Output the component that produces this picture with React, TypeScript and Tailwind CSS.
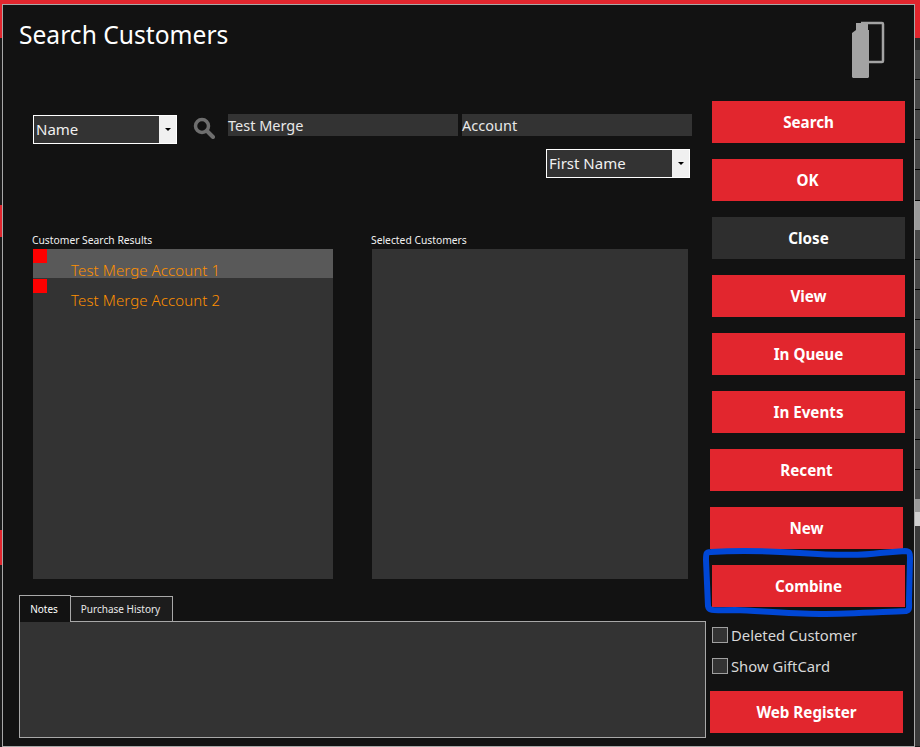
const font = "font-['Noto_Sans','Open_Sans',sans-serif]";

function Select({ label, w }: { label: string; w: string }) {
  return (
    <div className={`flex h-[29px] ${w} border border-white bg-[#333333]`}>
      <span className="flex-1 pl-[2px] text-[15px] leading-[27px] text-[#f0f0f0]">{label}</span>
      <span className="flex w-[17px] items-center justify-center bg-[#f0f0f0]">
        <span className="h-0 w-0 border-x-[3px] border-t-[3px] border-x-transparent border-t-black" />
      </span>
    </div>
  );
}

function Btn({ label, className = "", mt = "mt-[16px]" }: { label: string; className?: string; mt?: string }) {
  return (
    <div className={`flex h-[42px] items-center justify-center text-[15.2px] font-bold text-white ${className} ${mt}`}>
      {label}
    </div>
  );
}

function Check({ label }: { label: string }) {
  return (
    <div className="flex h-[16px] items-center gap-[3px] pl-[1px] text-[14.8px] leading-none text-[#d8d8d8]">
      <span className="h-[16px] w-[16px] border border-[#a0a0a0] bg-[#333333]" />
      {label}
    </div>
  );
}

function ResultRow({ label, active }: { label: string; active?: boolean }) {
  return (
    <div className={`relative h-[29px] pl-[38px] pt-[11px] text-[15px] font-light leading-[20px] tracking-[0.1px] text-[#ff9000] ${active ? "bg-[#595959]" : ""}`}>
      <span className="absolute left-0 top-0 h-[14px] w-[14px] bg-[#ff0000]" />
      {label}
    </div>
  );
}

const stripRows = [
  "h-[38px] bg-[#e2262e]",
  "h-[12px] bg-[#2a2a2a]",
  "h-[30px] border-b border-black bg-[#484848]",
  "h-[30px] border-b border-black bg-[#484848]",
  "h-[30px] border-b border-black bg-[#484848]",
  "h-[30px] border-b border-black bg-[#484848]",
  "h-[31px] border-b border-black bg-[#484848]",
  "h-[29px] bg-[#9a9a9a]",
  "h-[30px] border-b border-black bg-[#484848]",
  "h-[30px] border-b border-black bg-[#484848]",
  "h-[30px] border-b border-black bg-[#484848]",
  "h-[30px] border-b border-black bg-[#484848]",
  "h-[30px] border-b border-black bg-[#484848]",
  "h-[30px] border-b border-black bg-[#484848]",
  "h-[30px] border-b border-black bg-[#484848]",
  "h-[30px] border-b border-black bg-[#484848]",
  "h-[29px] bg-[#484848]",
  "h-[13px] bg-[#9a9a9a]",
  "h-[14px] bg-[#d0d0d0]",
  "h-[220px] bg-[#3a3a3a]",
];

export default function App() {
  return (
    <div className={`relative h-[747px] w-[920px] overflow-hidden bg-[#1a1a1a] pl-[2px] pt-[4px] ${font}`}>
      <div className="absolute left-0 top-0 h-[4px] w-[920px] bg-[#e2262e]" />
      <div className="absolute left-0 top-0 flex h-[747px] w-[2px] flex-col">
        <div className="h-[38px] bg-[#e2262e]" />
        <div className="h-[167px] bg-[#1a1a1a]" />
        <div className="h-[32px] bg-[#e2262e]" />
        <div className="h-[293px] bg-[#1a1a1a]" />
        <div className="h-[35px] bg-[#e2262e]" />
      </div>
      <div className="absolute left-[915px] top-0 flex w-[5px] flex-col">
        {stripRows.map((c, i) => (
          <div key={i} className={c} />
        ))}
      </div>
      <div className="relative flex h-[743px] w-[913px] border border-[#a8a8a8] bg-[#121212]">
        <div className="flex w-[708px] flex-col">
          <h1 className="ml-[16px] mt-[12px] h-[36px] text-[24.6px] font-normal leading-[36px] text-white">Search Customers</h1>
          <div className="ml-[30px] mt-[61px] flex items-start">
            <div className="mt-px">
              <Select label="Name" w="w-[144px]" />
            </div>
            <svg className="ml-[16px] mt-[3px]" width="22" height="22" viewBox="0 0 22 22" fill="none">
              <circle cx="9" cy="9" r="6.5" stroke="#6e6e6e" strokeWidth="3.5" />
              <path d="M14 14l6 6" stroke="#6e6e6e" strokeWidth="4" strokeLinecap="round" />
            </svg>
            <div className="ml-[13px] h-[22px] w-[230px] bg-[#333333] text-[14.5px] leading-[22px] text-[#e8e8e8]">Test Merge</div>
            <div className="ml-[4px] h-[22px] w-[230px] bg-[#333333] text-[14.5px] leading-[22px] text-[#e8e8e8]">Account</div>
          </div>
          <div className="ml-[543px] mt-[5px]">
            <Select label="First Name" w="w-[144px]" />
          </div>
          <div className="ml-[30px] mt-[56px] flex">
            <div className="w-[300px]">
              <div className="-ml-px h-[15px] text-[10.3px] leading-[13px] text-[#f0f0f0]">Customer Search Results</div>
              <div className="h-[330px] bg-[#333333]">
                <ResultRow label="Test Merge Account 1" active />
                <div className="mt-px">
                  <ResultRow label="Test Merge Account 2" />
                </div>
              </div>
            </div>
            <div className="ml-[39px] w-[316px]">
              <div className="-ml-px h-[15px] text-[10.3px] leading-[13px] text-[#f0f0f0]">Selected Customers</div>
              <div className="h-[330px] bg-[#333333]" />
            </div>
          </div>
          <div className="ml-[16px] mt-[16px] flex items-end">
            <div className="z-10 -mb-px flex h-[27px] w-[52px] items-center justify-center border border-b-0 border-[#a8a8a8] bg-[#121212] pr-[2px] text-[10px] text-white">Notes</div>
            <div className="flex h-[25px] w-[102px] items-center justify-center border border-b-0 border-l-0 border-[#a8a8a8] bg-[#1c1c1c] pr-[2px] text-[10px] text-[#e8e8e8]">Purchase History</div>
          </div>
          <div className="ml-[16px] h-[117px] w-[687px] border border-[#a8a8a8] bg-[#333333]" />
        </div>
        <div className="flex flex-1 flex-col">
          <svg className="ml-[140px] mt-[16px]" width="34" height="58" viewBox="0 0 34 58" fill="none">
            <path d="M10 2h21a1 1 0 0 1 1 1v37a1 1 0 0 1-1 1H16" stroke="#a3a3a3" strokeWidth="2.5" />
            <path d="M5 2h12v7h1v47l-1 1H2l-1-1V12l4-3z" fill="#a3a3a3" />
          </svg>
          <Btn label="Search" mt="mt-[22px]" className="ml-[1px] w-[193px] bg-[#e2262e]" />
          <Btn label="OK" className="ml-[1px] w-[191px] bg-[#e2262e]" />
          <Btn label="Close" className="ml-[1px] w-[193px] bg-[#2e2e2e]" />
          <Btn label="View" className="ml-[1px] w-[193px] bg-[#e2262e]" />
          <Btn label="In Queue" className="ml-[1px] w-[193px] bg-[#e2262e]" />
          <Btn label="In Events" className="ml-[1px] w-[193px] bg-[#e2262e]" />
          <Btn label="Recent" className="-ml-[1px] w-[193px] bg-[#e2262e]" />
          <Btn label="New" className="-ml-[1px] w-[193px] bg-[#e2262e]" />
          <Btn label="Combine" className="ml-[1px] w-[193px] bg-[#e2262e]" />
          <div className="mt-[20px] flex flex-col gap-[15px]">
            <Check label="Deleted Customer" />
            <Check label="Show GiftCard" />
          </div>
          <Btn label="Web Register" mt="mt-[17px]" className="-ml-[1px] w-[193px] bg-[#e2262e]" />
        </div>
      </div>
      <svg className="absolute left-0 top-0" width="920" height="747" fill="none">
        <path d="M711 552C740 550 770 551 800 553S860 556 880 553L905 551C910 551 910 554 910 558L909 600C909 608 910 610 906 611C880 612 850 614 820 614S760 611 735 610C715 610 709 612 708 606L706 560C706 553 706 552 711 552Z" stroke="#0047d6" strokeWidth="6" />
      </svg>
    </div>
  );
}
